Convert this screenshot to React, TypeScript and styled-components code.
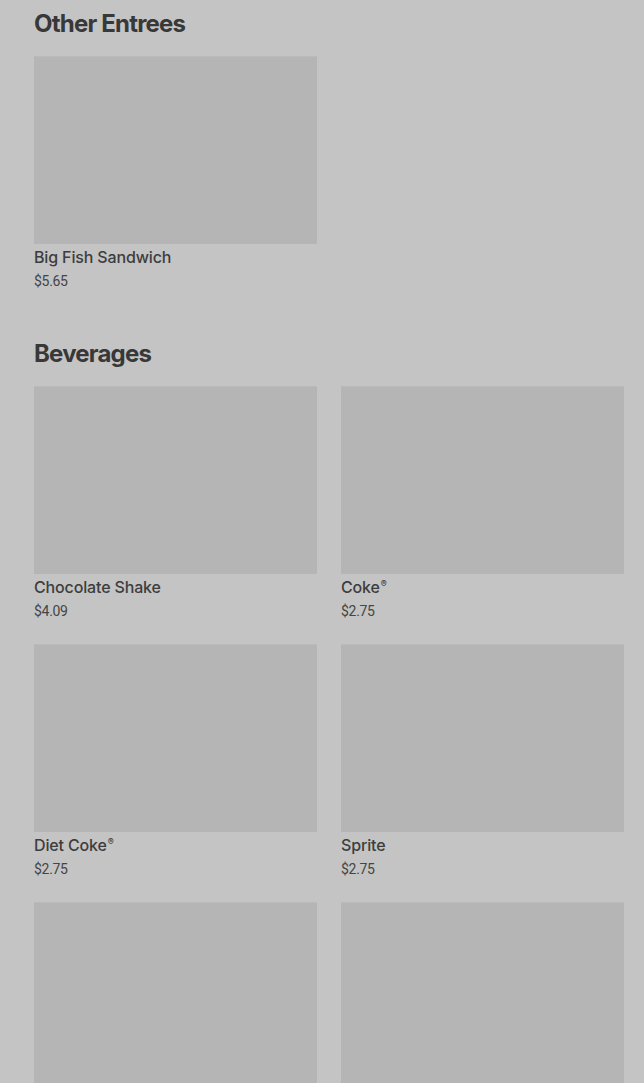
import React from 'react';
import styled, { createGlobalStyle } from 'styled-components';

interface MenuItem {
  id: string;
  name: string;
  price: string;
  mark?: boolean;
}

interface MenuSection {
  title: string;
  items: MenuItem[];
}

const sections: MenuSection[] = [
  {
    title: 'Other Entrees',
    items: [{ id: 'fish', name: 'Big Fish Sandwich', price: '$5.65' }],
  },
  {
    title: 'Beverages',
    items: [
      { id: 'shake', name: 'Chocolate Shake', price: '$4.09' },
      { id: 'coke', name: 'Coke', price: '$2.75', mark: true },
      { id: 'diet', name: 'Diet Coke', price: '$2.75', mark: true },
      { id: 'sprite', name: 'Sprite', price: '$2.75' },
      { id: 'lemonade', name: 'Lemonade', price: '$2.75' },
      { id: 'water', name: 'Bottled Water', price: '$2.29' },
    ],
  },
];

const GlobalStyle = createGlobalStyle`
  html, body {
    margin: 0;
    padding: 0;
    background: #c4c4c4;
  }
  body {
    font-family: Roboto, "Liberation Sans", sans-serif;
    -webkit-font-smoothing: antialiased;
  }
`;

const App: React.FC = () => {
  return (
    <>
      <GlobalStyle />
      <Page>
        {sections.map(section => (
          <Section key={section.title}>
            <Heading>{section.title}</Heading>
            <Grid>
              {section.items.map(item => (
                <Card key={item.id}>
                  <Thumb />
                  <Name>
                    {item.name}
                    {item.mark && <Reg>®</Reg>}
                  </Name>
                  <Price>{item.price}</Price>
                </Card>
              ))}
            </Grid>
          </Section>
        ))}
      </Page>
    </>
  );
};

export default App;

const Page = styled.main`
  padding: 8px 20px 40px 34px;
  display: flex;
  flex-direction: column;
  gap: 47px;
`;

const Section = styled.section`
  display: flex;
  flex-direction: column;
`;

const Heading = styled.h2`
  margin: 0 0 16px;
  font-family: Inter, "Liberation Sans", sans-serif;
  font-size: 24px;
  line-height: 32px;
  font-weight: 700;
  letter-spacing: -0.8px;
  color: #383838;
`;

const Grid = styled.div`
  display: grid;
  grid-template-columns: repeat(2, 283px);
  column-gap: 24px;
  row-gap: 23px;
`;

const Card = styled.div`
  display: flex;
  flex-direction: column;
`;

const Thumb = styled.div`
  height: 187px;
  background: #b5b5b5;
  border-top: 1px solid #bababa;
`;

const Name = styled.div`
  margin-top: 3px;
  font-family: Inter, "Liberation Sans", sans-serif;
  font-size: 16px;
  line-height: 20px;
  font-weight: 500;
  letter-spacing: -0.15px;
  color: #3d3d3d;
`;

const Reg = styled.sup`
  font-size: 9px;
  line-height: 0;
  margin-left: 1px;
`;

const Price = styled.div`
  margin-top: 4px;
  font-size: 14px;
  line-height: 20px;
  color: #454545;
  letter-spacing: -0.3px;
`;
